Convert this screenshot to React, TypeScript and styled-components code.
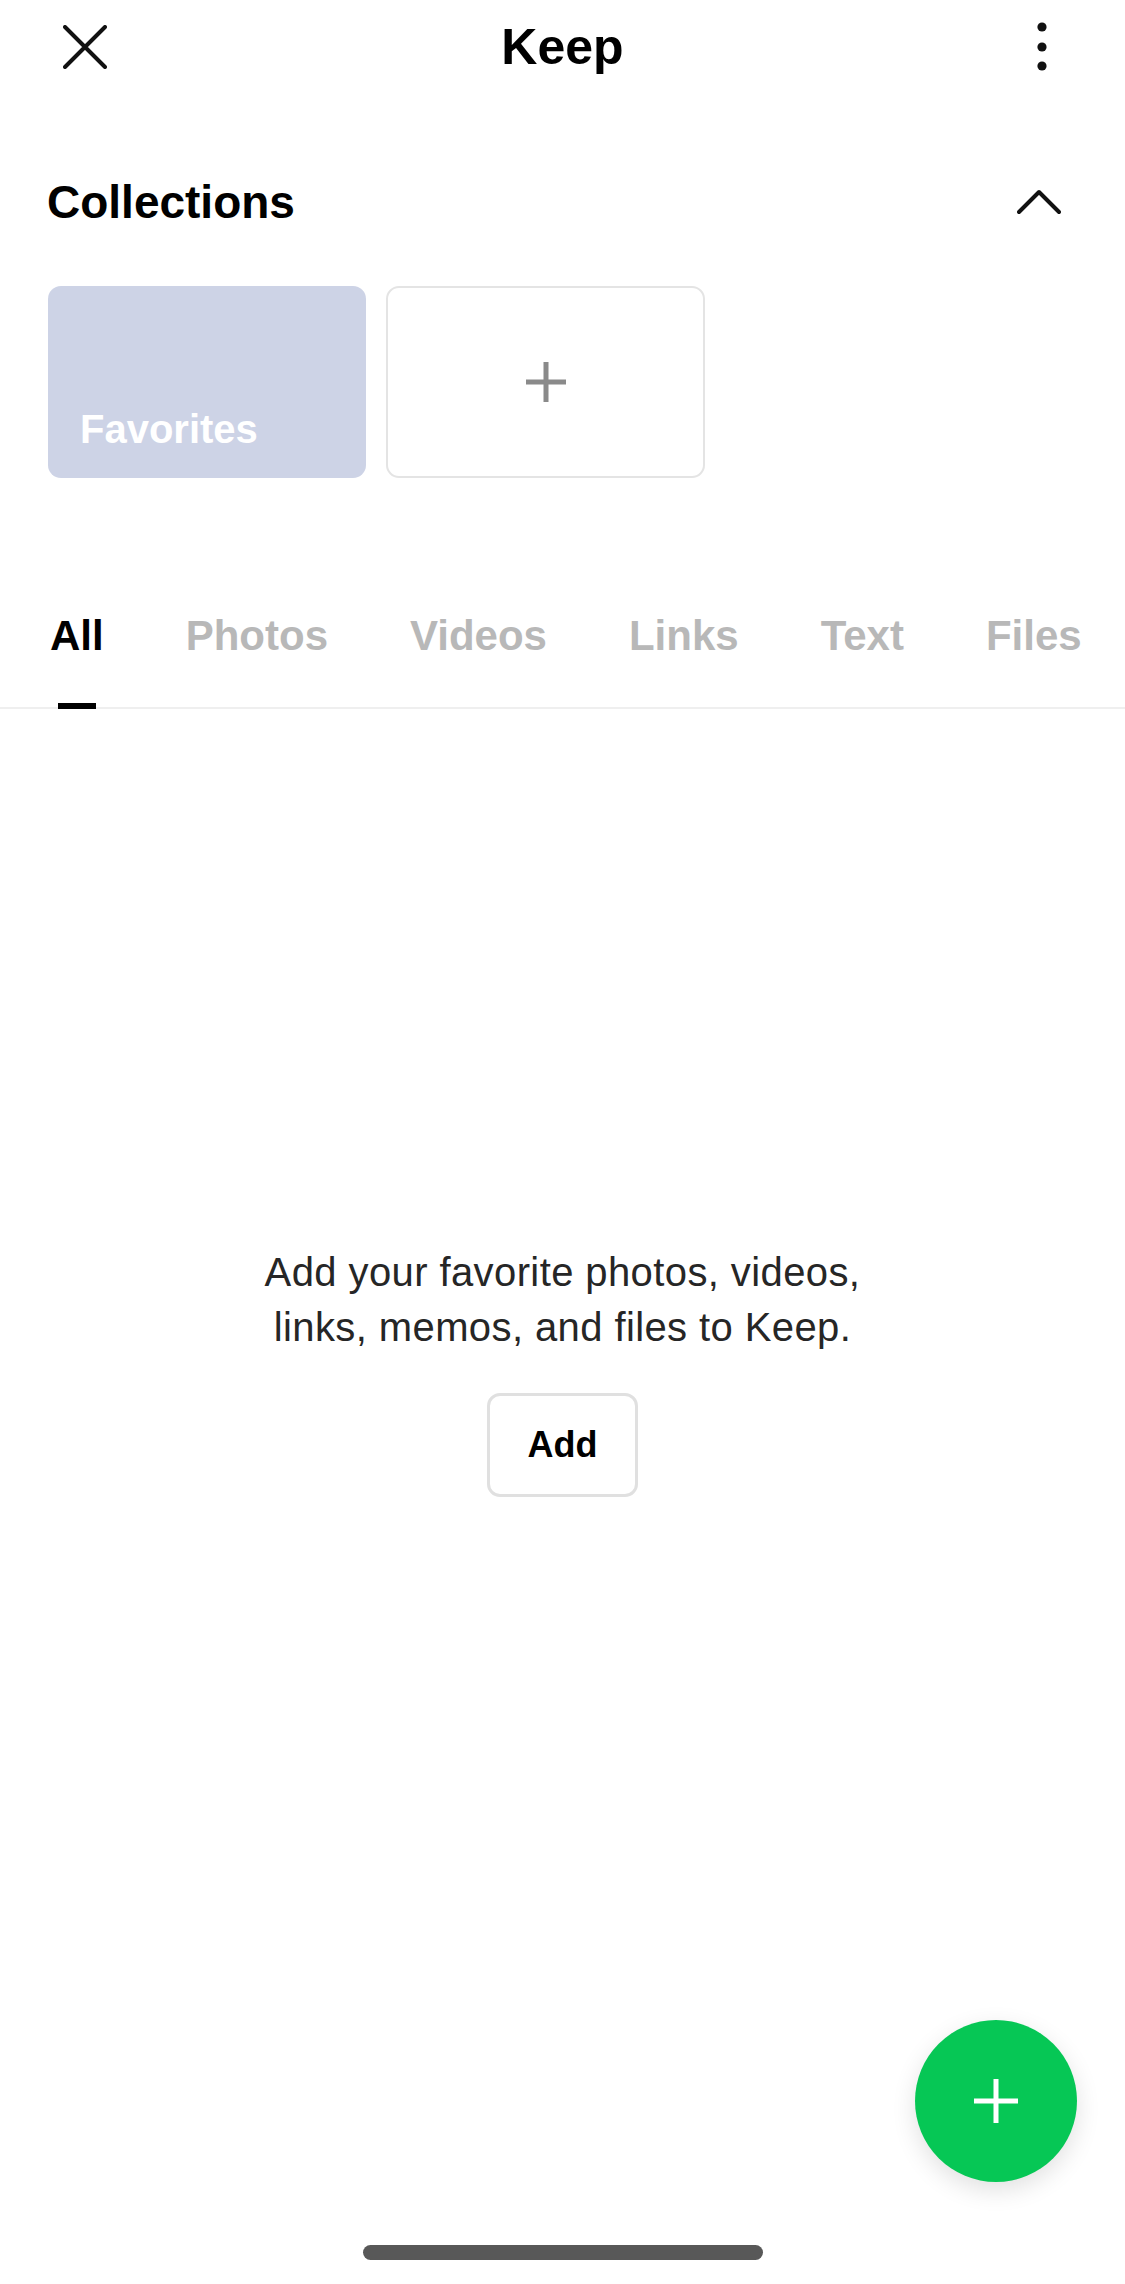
import styled, { createGlobalStyle } from "styled-components";

const GlobalStyle = createGlobalStyle`
  html, body {
    margin: 0;
    padding: 0;
    background: #ffffff;
    overflow: hidden;
  }

  body {
    font-family: "Liberation Sans", Arial, sans-serif;
    color: #111111;
  }
`;

const tabs = ["All", "Photos", "Videos", "Links", "Text", "Files"];

const Keep = () => {
  return (
    <Screen>
      <GlobalStyle />

      <NavBar>
        <NavLeft>
          <IconButton aria-label="close">
            <svg width="44" height="44" viewBox="0 0 44 44">
              <path
                d="M2 2 L42 42 M42 2 L2 42"
                stroke="#111"
                strokeWidth="4"
                strokeLinecap="round"
              />
            </svg>
          </IconButton>
        </NavLeft>
        <Title>Keep</Title>
        <NavRight>
          <IconButton aria-label="more">
            <svg width="20" height="58" viewBox="0 0 20 58">
              <circle cx="10" cy="9" r="4.6" fill="#111" />
              <circle cx="10" cy="29" r="4.6" fill="#111" />
              <circle cx="10" cy="48" r="4.6" fill="#111" />
            </svg>
          </IconButton>
        </NavRight>
      </NavBar>

      <SectionHeader>
        <SectionTitle>Collections</SectionTitle>
        <IconButton aria-label="collapse">
          <svg width="44" height="44" viewBox="0 0 44 44">
            <polyline
              points="2,32 22,12 42,32"
              fill="none"
              stroke="#111"
              strokeWidth="4"
              strokeLinecap="round"
              strokeLinejoin="round"
            />
          </svg>
        </IconButton>
      </SectionHeader>

      <CardRow>
        <CollectionCard>
          <CardLabel>Favorites</CardLabel>
        </CollectionCard>
        <AddCard aria-label="new collection">
          <svg width="42" height="42" viewBox="0 0 42 42">
            <path d="M21 1 V41 M1 21 H41" stroke="#8a8a8a" strokeWidth="5" />
          </svg>
        </AddCard>
      </CardRow>

      <TabBar>
        {tabs.map((tab, i) => (
          <Tab key={tab} $active={i === 0}>
            {tab}
          </Tab>
        ))}
      </TabBar>

      <Empty>
        <EmptyText>
          Add your favorite photos, videos,
          <br />
          links, memos, and files to Keep.
        </EmptyText>
        <OutlineButton>Add</OutlineButton>
      </Empty>

      <Fab aria-label="add">
        <svg width="46" height="46" viewBox="0 0 46 46">
          <path d="M23 1 V45 M1 23 H45" stroke="#fff" strokeWidth="5" />
        </svg>
      </Fab>

      <HomeIndicator />
    </Screen>
  );
};

const Screen = styled.div`
  position: relative;
  width: 1125px;
  min-height: 2284px;
  display: flex;
  flex-direction: column;
  background: #ffffff;
`;

const NavBar = styled.header`
  height: 94px;
  display: grid;
  grid-template-columns: 1fr auto 1fr;
  align-items: center;
`;

const NavLeft = styled.div`
  display: flex;
  padding-left: 63px;
`;

const NavRight = styled.div`
  display: flex;
  justify-content: flex-end;
  padding-right: 73px;
`;

const IconButton = styled.button`
  display: flex;
  align-items: center;
  justify-content: center;
  padding: 0;
  border: none;
  background: none;
`;

const Title = styled.h1`
  margin: 0;
  font-size: 50px;
  font-weight: 700;
  line-height: 94px;
  color: #000;
`;

const SectionHeader = styled.div`
  height: 80px;
  margin-top: 68px;
  padding: 0 64px 0 47px;
  display: flex;
  align-items: center;
  justify-content: space-between;
`;

const SectionTitle = styled.h2`
  margin: 0;
  font-size: 46px;
  font-weight: 700;
  line-height: 80px;
  color: #000;
`;

const CardRow = styled.div`
  display: flex;
  gap: 20px;
  padding: 0 48px;
  margin-top: 44px;
`;

const CollectionCard = styled.div`
  width: 318px;
  height: 192px;
  box-sizing: border-box;
  border-radius: 13px;
  background: #cdd3e6;
  display: flex;
  align-items: flex-end;
  padding: 0 0 29px 32px;
`;

const CardLabel = styled.span`
  font-size: 40px;
  font-weight: 700;
  line-height: 40px;
  color: #ffffff;
`;

const AddCard = styled.button`
  width: 319px;
  height: 192px;
  box-sizing: border-box;
  border-radius: 13px;
  border: 2px solid #e4e4e4;
  background: #ffffff;
  display: flex;
  align-items: center;
  justify-content: center;
  padding: 0;
`;

const TabBar = styled.nav`
  display: flex;
  gap: 82px;
  margin-top: 137px;
  padding: 0 50px;
  border-bottom: 2px solid #efefef;
  white-space: nowrap;
`;

const Tab = styled.div<{ $active?: boolean }>`
  position: relative;
  font-size: 42px;
  font-weight: 700;
  line-height: 42px;
  padding-bottom: 50px;
  color: ${(p) => (p.$active ? "#000000" : "#b8b8b8")};

  &::after {
    content: "";
    display: ${(p) => (p.$active ? "block" : "none")};
    position: absolute;
    left: 50%;
    bottom: -2px;
    width: 38px;
    height: 6px;
    margin-left: -19px;
    background: #000;
  }
`;

const Empty = styled.section`
  display: flex;
  flex-direction: column;
  align-items: center;
  padding-top: 536px;
`;

const EmptyText = styled.p`
  margin: 0;
  text-align: center;
  font-size: 40px;
  letter-spacing: 0.4px;
  line-height: 55px;
  color: #262626;
`;

const OutlineButton = styled.button`
  margin-top: 38px;
  width: 151px;
  height: 104px;
  border: 3px solid #e0e0e0;
  border-radius: 13px;
  background: #ffffff;
  font-family: "Liberation Sans", Arial, sans-serif;
  font-size: 36px;
  font-weight: 700;
  color: #000;
`;

const Fab = styled.button`
  position: absolute;
  right: 48px;
  bottom: 102px;
  width: 162px;
  height: 162px;
  border: none;
  border-radius: 50%;
  background: #06c755;
  box-shadow: 0 8px 24px rgba(0, 0, 0, 0.12);
  display: flex;
  align-items: center;
  justify-content: center;
  padding: 0;
`;

const HomeIndicator = styled.div`
  position: absolute;
  left: 50%;
  bottom: 24px;
  width: 400px;
  height: 15px;
  margin-left: -200px;
  border-radius: 8px;
  background: #585858;
`;

export default Keep;
